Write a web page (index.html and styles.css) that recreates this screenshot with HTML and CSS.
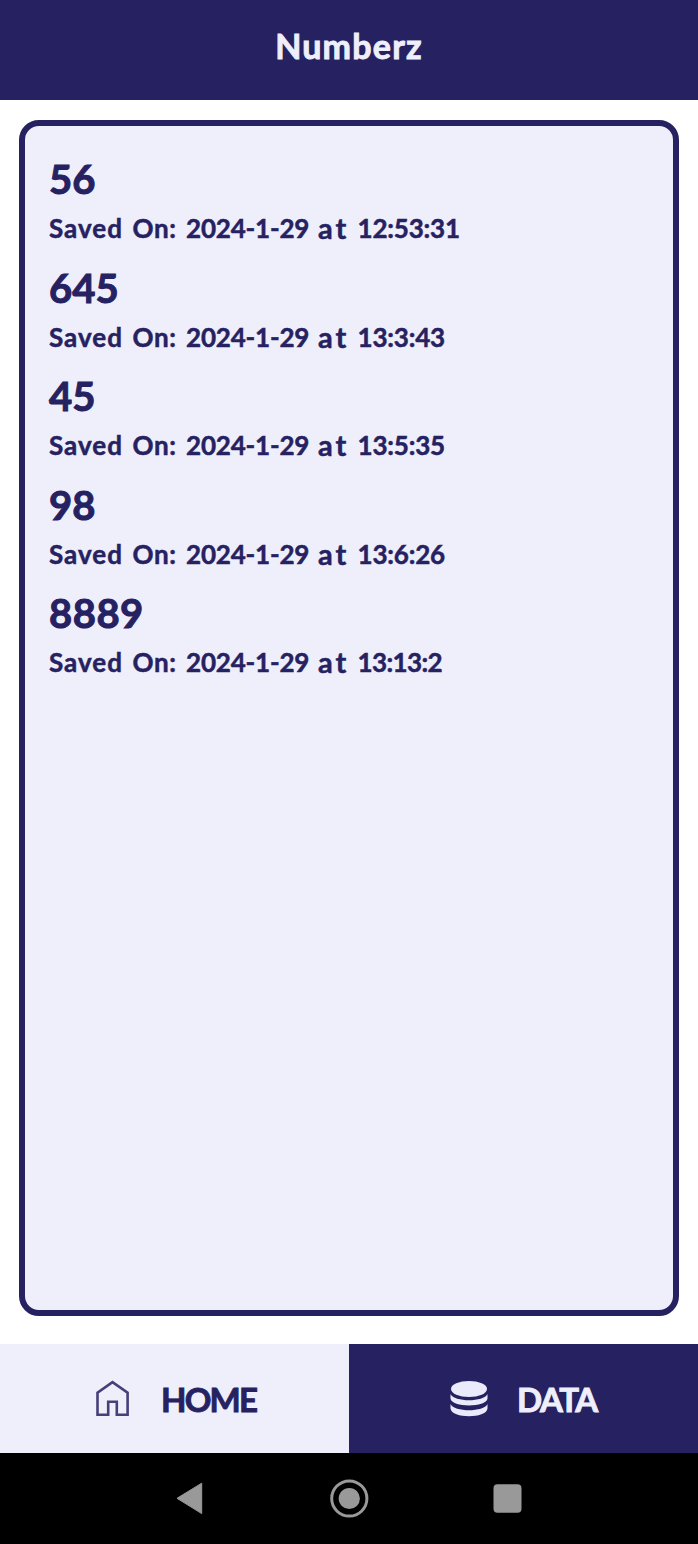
FILE: index.html
```html
<!DOCTYPE html>
<html lang="en">
<head>
<meta charset="utf-8">
<title>Numberz</title>
<link rel="stylesheet" href="styles.css">
</head>
<body>
<header class="header"><h1 class="title">Numberz</h1></header>
<main class="content">
  <ul class="list">
    <li class="entry"><div class="number">56</div><div class="saved"><span class="word-saved">Saved</span><span class="word-on">On:</span><span class="date">2024-1-29</span><span class="word-at">at</span><span class="time">12:53:31</span></div></li>
    <li class="entry"><div class="number">645</div><div class="saved"><span class="word-saved">Saved</span><span class="word-on">On:</span><span class="date">2024-1-29</span><span class="word-at">at</span><span class="time">13:3:43</span></div></li>
    <li class="entry"><div class="number">45</div><div class="saved"><span class="word-saved">Saved</span><span class="word-on">On:</span><span class="date">2024-1-29</span><span class="word-at">at</span><span class="time">13:5:35</span></div></li>
    <li class="entry"><div class="number">98</div><div class="saved"><span class="word-saved">Saved</span><span class="word-on">On:</span><span class="date">2024-1-29</span><span class="word-at">at</span><span class="time">13:6:26</span></div></li>
    <li class="entry"><div class="number number-wide">8889</div><div class="saved"><span class="word-saved">Saved</span><span class="word-on">On:</span><span class="date">2024-1-29</span><span class="word-at">at</span><span class="time time-narrow">13:13:2</span></div></li>
  </ul>
</main>
<nav class="tabs">
  <a class="tab tab-home">
    <svg class="icon" width="40" height="40" viewBox="0 0 40 40"><path d="M4.5 35.8V13.7L19.5 3.1 34.6 13.7V35.8H23.8V22.7H15.2V35.8Z" fill="none" stroke="#454078" stroke-width="2.6"/></svg>
    <span class="label label-home">HOME</span>
  </a>
  <a class="tab tab-data">
    <svg class="icon" width="40" height="40" viewBox="0 0 40 40" fill="#ebeafa"><ellipse cx="20" cy="10" rx="18" ry="8"/><path d="M1.500 15C5 23.300 35 23.300 38.500 15V19.500C37.500 28.800 2.500 28.800 1.500 19.500Z"/><path d="M1.500 25C5 33.300 35 33.300 38.500 25V29.500C37.500 39.800 2.500 39.800 1.500 29.500Z"/></svg>
    <span class="label label-data">DATA</span>
  </a>
</nav>
<footer class="system">
  <svg width="40" height="40" viewBox="0 0 40 40"><path d="M6 20.300 30.700 5.200V35.600Z" fill="#999" stroke="#999" stroke-linejoin="round"/></svg>
  <svg width="40" height="40" viewBox="0 0 40 40"><circle cx="20.300" cy="20.500" r="17.600" fill="none" stroke="#999" stroke-width="3"/><circle cx="20.300" cy="20.500" r="10.600" fill="#999"/></svg>
  <svg width="40" height="40" viewBox="0 0 40 40"><rect x="5.500" y="6.300" width="28" height="28.500" rx="4" fill="#999"/></svg>
</footer>
</body>
</html>
```
FILE: styles.css
```css
* { box-sizing: border-box; }
body {
  margin: 0;
  height: 1544px;
  display: flex;
  flex-direction: column;
  background: #fff;
  color: #262161;
  font-family: Lato, sans-serif;
  font-weight: 700;
}
.header {
  height: 100px;
  padding-bottom: 9px;
  display: flex;
  align-items: center;
  justify-content: center;
  background: #262161;
  color: #efeffb;
}
.title {
  margin: 0;
  font-size: 34px;
  letter-spacing: 1.2px;
  -webkit-text-stroke: 0.9px;
}
.content {
  height: 1244px;
  padding: 20px 19px 28px 19px;
}
.list {
  height: 1196px;
  margin: 0;
  padding: 28px 24px;
  list-style: none;
  background: #efeffb;
  border: 6px solid #262161;
  border-radius: 20px;
}
.entry { height: 108.600px; }
.number {
  height: 52px;
  line-height: 50px;
  font-size: 40px;
  -webkit-text-stroke: 1px;
}
.number-wide { letter-spacing: 0.5px; }
.saved {
  display: flex;
  height: 44px;
  line-height: 44px;
  font-size: 26px;
  white-space: nowrap;
  -webkit-text-stroke: 0.5px;
}
.word-saved { width: 83.500px; letter-spacing: 1px; }
.word-on { width: 53.500px; letter-spacing: 0.6px; }
.date { width: 132px; letter-spacing: -0.2px; }
.word-at { width: 39.500px; font-size: 29px; letter-spacing: 3px; }
.time { letter-spacing: -0.2px; }
.time-narrow { letter-spacing: -0.6px; }
.tabs { display: flex; height: 109px; }
.tab {
  width: 50%;
  display: flex;
  align-items: center;
}
.tab-home { padding-left: 93px; background: #efeffb; }
.tab-data { padding-left: 100px; background: #262161; color: #efeffb; }
.label {
  font-size: 33px;
  line-height: 40px;
  -webkit-text-stroke: 0.9px;
}
.label-home { margin-left: 28px; letter-spacing: -1.8px; }
.label-data { margin-left: 28px; letter-spacing: -1.4px; }
.system {
  height: 91px;
  padding-bottom: 2px;
  display: flex;
  justify-content: center;
  align-items: center;
  gap: 118.500px;
  background: #000;
}
```
